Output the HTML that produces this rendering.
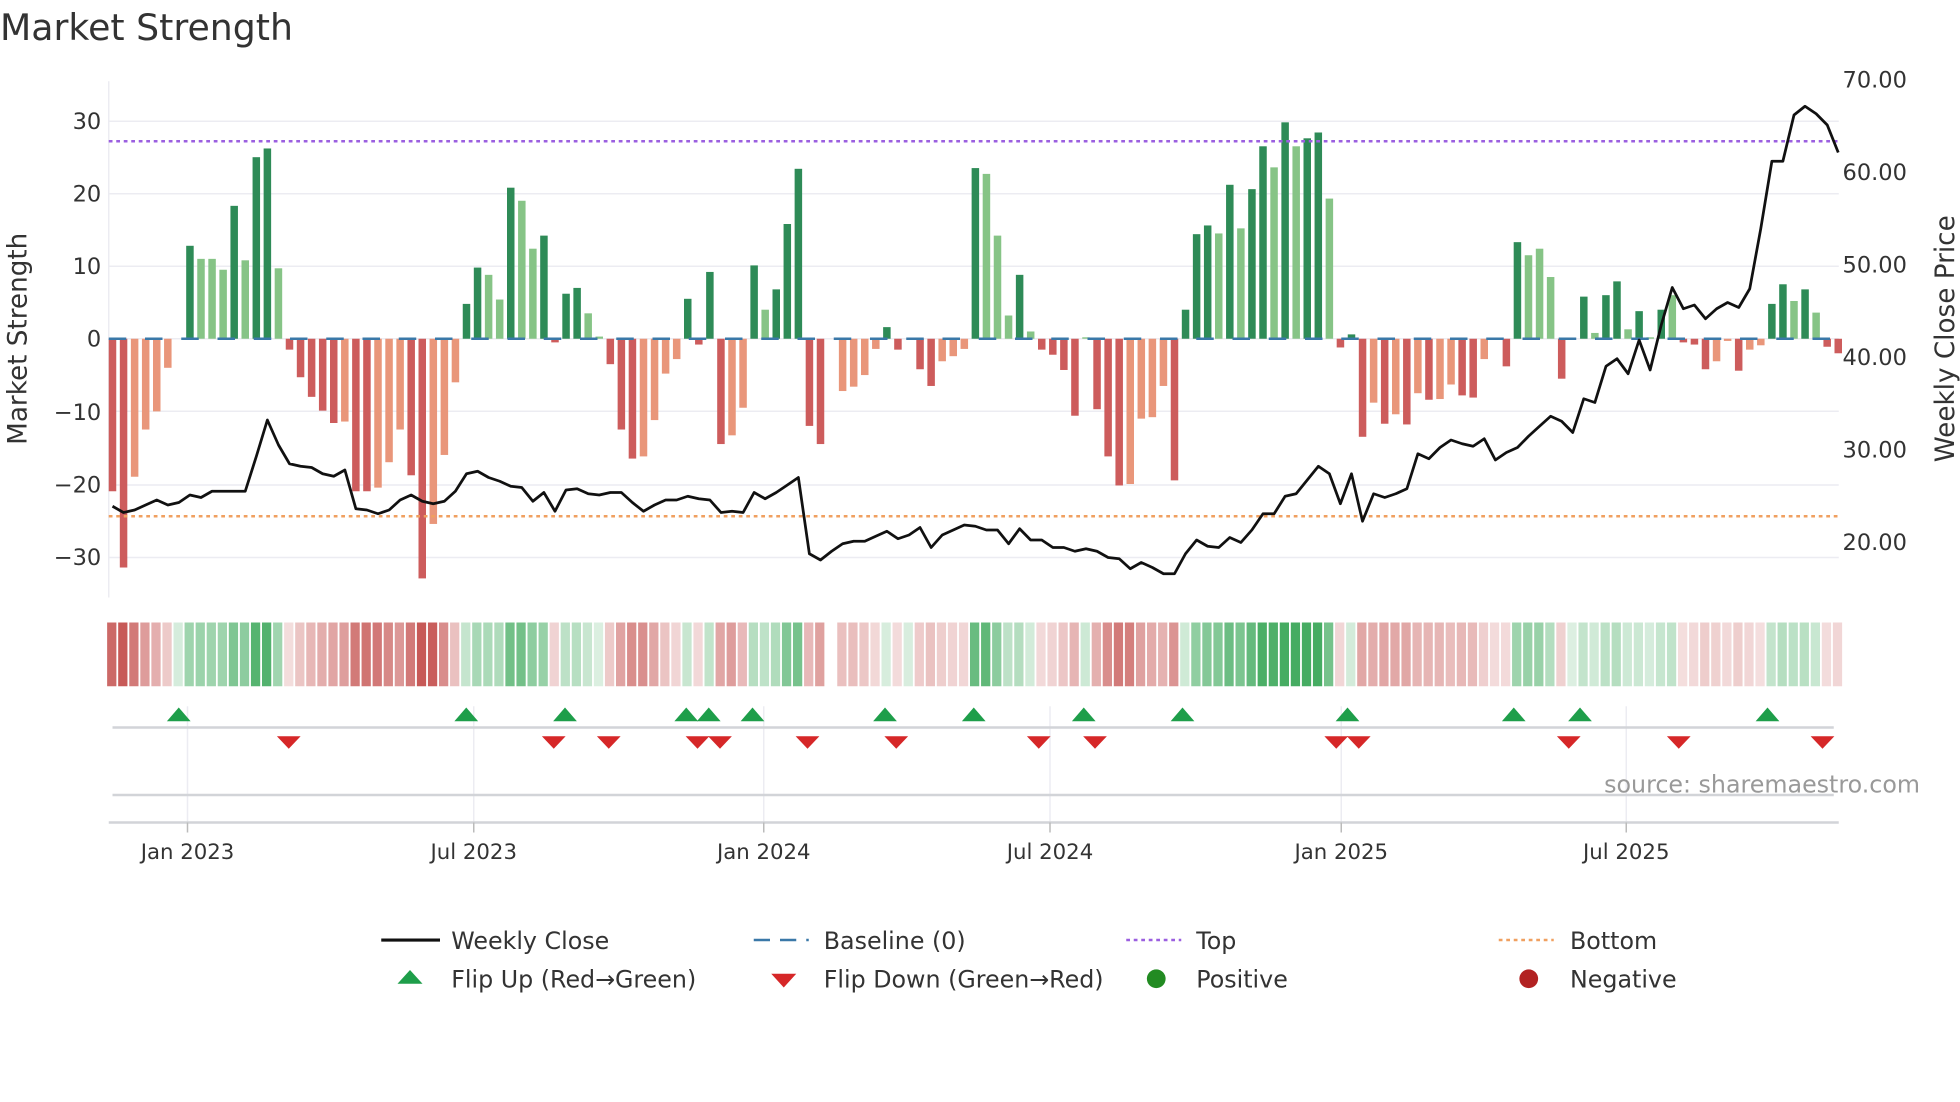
<!DOCTYPE html>
<html><head><meta charset="utf-8"><style>
html,body{margin:0;padding:0;background:#fff;width:1960px;height:1102px;overflow:hidden}
svg{display:block}
text{font-family:"DejaVu Sans","Liberation Sans",sans-serif;fill:#333}
</style></head><body>
<svg id="s" width="1960" height="1102" viewBox="0 0 1568 881.6" xmlns="http://www.w3.org/2000/svg">
<text x="0" y="32" font-size="29">Market Strength</text>
<g id="grid" stroke="#ececf2" stroke-width="1.2"></g>
<line x1="87" y1="65" x2="87" y2="478" stroke="#ececf2" stroke-width="1.2"/>
<g id="bars"></g>
<line x1="87" y1="271" x2="1471" y2="271" stroke="#3a78a8" stroke-width="2" stroke-dasharray="14 15"/>
<line x1="87" y1="113" x2="1471" y2="113" stroke="#9b5fe0" stroke-width="2" stroke-dasharray="3 3"/>
<line x1="87" y1="413" x2="1471" y2="413" stroke="#f0a060" stroke-width="2" stroke-dasharray="3 3"/>
<polyline id="price" fill="none" stroke="#111" stroke-width="2.2" stroke-linejoin="round"/>
<g font-size="18" text-anchor="end">
<text x="81" y="103">30</text><text x="81" y="161">20</text><text x="81" y="219">10</text><text x="81" y="277">0</text>
<text x="81" y="336">−10</text><text x="81" y="394">−20</text><text x="81" y="452">−30</text>
</g>
<g font-size="18">
<text x="1474" y="70">70.00</text><text x="1474" y="144">60.00</text><text x="1474" y="218">50.00</text>
<text x="1474" y="292">40.00</text><text x="1474" y="366">30.00</text><text x="1474" y="440">20.00</text>
</g>
<text transform="translate(21,271) rotate(-90)" font-size="21" text-anchor="middle">Market Strength</text>
<text transform="translate(1563,271) rotate(-90)" font-size="21" text-anchor="middle">Weekly Close Price</text>
<g id="heat"></g>
<g id="vg" stroke="#ececf2" stroke-width="1.2"></g>
<line x1="90" y1="582" x2="1467" y2="582" stroke="#d2d4d8" stroke-width="2"/>
<line x1="90" y1="636" x2="1467" y2="636" stroke="#d2d4d8" stroke-width="2"/>
<line x1="87" y1="658" x2="1471" y2="658" stroke="#d2d4d8" stroke-width="2"/>
<g id="marks"></g>
<g id="ticks" stroke="#bbb" stroke-width="1.2"></g>
<g font-size="17" text-anchor="middle">
<text x="150" y="687">Jan 2023</text><text x="379" y="687">Jul 2023</text><text x="611" y="687">Jan 2024</text>
<text x="840" y="687">Jul 2024</text><text x="1073" y="687">Jan 2025</text><text x="1301" y="687">Jul 2025</text>
</g>
<text x="1536" y="634" font-size="19" text-anchor="end" style="fill:#999">source: sharemaestro.com</text>
<g font-size="19">
<line x1="305" y1="752" x2="352" y2="752" stroke="#111" stroke-width="2.5"/>
<text x="361" y="759">Weekly Close</text>
<line x1="603" y1="752" x2="647" y2="752" stroke="#3a78a8" stroke-width="2" stroke-dasharray="13 8"/>
<text x="659" y="759">Baseline (0)</text>
<line x1="901" y1="752" x2="945" y2="752" stroke="#9b5fe0" stroke-width="2" stroke-dasharray="3 3"/>
<text x="957" y="759">Top</text>
<line x1="1199" y1="752" x2="1243" y2="752" stroke="#f0a060" stroke-width="2" stroke-dasharray="3 3"/>
<text x="1256" y="759">Bottom</text>
<polygon points="328,776 318,787 338,787" fill="#1e9e4a"/>
<text x="361" y="790">Flip Up (Red→Green)</text>
<polygon points="617,779 637,779 627,790" fill="#d62728"/>
<text x="659" y="790">Flip Down (Green→Red)</text>
<circle cx="925" cy="783" r="7.5" fill="#228b22"/>
<text x="957" y="790">Positive</text>
<circle cx="1223" cy="783" r="7.5" fill="#b22222"/>
<text x="1256" y="790">Negative</text>
</g>
</svg>
<script>
var NS="http://www.w3.org/2000/svg";
function el(p,t,a){var e=document.createElementNS(NS,t);for(var k in a)e.setAttribute(k,a[k]);document.getElementById(p).appendChild(e);return e;}
[97,155,213,271,329,388,446].forEach(function(y){el("grid","line",{x1:87,x2:1471,y1:y,y2:y});});
var d="-21R -31.5R -19S -12.5S -10S -4S 0L 12.8D 11L 11L 9.5L 18.3D 10.8L 25D 26.2D 9.7L -1.5R -5.3R -8R -9.9R -11.6R -11.4S -21R -21R -20.5S -17S -12.5S -18.8R -33R -25.5S -16S -6S 4.8D 9.8D 8.8L 5.4L 20.8D 19L 12.4L 14.2D -0.5R 6.2D 7D 3.5L 0.3L -3.5R -12.5R -16.5R -16.2S -11.2S -4.8S -2.8S 5.5D -0.8R 9.2D -14.5R -13.3S -9.5S 10.1D 4L 6.8D 15.8D 23.4D -12R -14.5R 0X -7.2S -6.6S -5S -1.4S 1.6D -1.5R 0L -4.2R -6.5R -3.1S -2.4S -1.4S 23.5D 22.7L 14.2L 3.2L 8.8D 1L -1.5R -2.2R -4.3R -10.6R 0.2L -9.7R -16.2R -20.2R -20S -11S -10.8S -6.5S -19.5R 4D 14.4D 15.6D 14.5L 21.2D 15.2L 20.6D 26.5D 23.6L 29.8D 26.5L 27.6D 28.4D 19.3L -1.2R 0.6D -13.5R -8.8S -11.7R -10.4S -11.8R -7.5S -8.4R -8.3S -6.3S -7.8R -8.1R -2.8S 0S -3.8R 13.3D 11.5L 12.4L 8.5L -5.5R 0L 5.8D 0.8L 6D 7.9D 1.3L 3.8D 0.2L 4D 6L -0.5R -0.8R -4.2R -3.1S -0.3S -4.4R -1.5S -0.9S 4.8D 7.5D 5.2L 6.8D 3.6L -1.1R -2R".split(" ");
var col={D:"#2e8b57",L:"#86c486",R:"#cd5c5c",S:"#e9967a",X:"#fff"};
var vals=[];
d.forEach(function(s,i){
 var v=parseFloat(s),t=s.slice(-1),x=90+8.85*i;vals.push([v,t]);
 if(Math.abs(v)>0.05){var y0=271,y1=271-v*5.81;el("bars","rect",{x:x-3,width:6,y:Math.min(y0,y1),height:Math.abs(y1-y0),fill:col[t]});}
});
for(var i=0;i<vals.length;i++){
 if(vals[i][1]=="X")continue;
 var s=0,n=0;for(var j=i-1;j<=i+1;j++){if(j>=0&&j<vals.length){s+=vals[j][0];n++;}}
 var v=vals[i][0]*0.6+(s/n)*0.4;var pos=(vals[i][0]>0)||(vals[i][0]==0&&vals[i][1]!="R"&&vals[i][1]!="S");
 var t=Math.min(0.95,0.18+Math.abs(v)/34);
 var c=pos?[60,168,90]:[196,80,78];
 var r=Math.round(255+(c[0]-255)*t),g=Math.round(255+(c[1]-255)*t),b=Math.round(255+(c[2]-255)*t);
 var x=90+8.85*i;el("heat","rect",{x:x-4.3,width:7.4,y:498,height:51,fill:"rgb("+r+","+g+","+b+")"});
}
[150,379,611,840,1073,1301].forEach(function(x){el("vg","line",{x1:x,x2:x,y1:565,y2:658});el("ticks","line",{x1:x,x2:x,y1:658,y2:666});});
[143,373,452,549,567,602,708,779,867,946,1078,1211,1264,1414].forEach(function(x){el("marks","polygon",{points:(x)+",566 "+(x-9.5)+",577 "+(x+9.5)+",577",fill:"#1e9e4a"});});
[231,443,487,558,576,646,717,831,876,1069,1087,1255,1343,1458].forEach(function(x){el("marks","polygon",{points:(x-9.5)+",589 "+(x+9.5)+",589 "+x+",599",fill:"#d62728"});});
var py=[405,410,408,404,400,404,402,396,398,393,393,393,393,365,336,356,371,373,374,379,381,376,407,408,411,408,400,396,401,403,401,393,379,377,382,385,389,390,401,394,409,392,391,395,396,394,394,402,409,404,400,400,397,399,400,410,409,410,394,399,394,388,382,443,448,441,435,433,433,429,425,431,428,422,438,428,424,420,421,424,424,435,423,432,432,438,438,441,439,441,446,447,455,450,454,459,459,443,432,437,438,430,434,424,411,411,397,395,384,373,379,403,379,417,395,398,395,391,363,367,358,352,355,357,351,368,362,358,349,341,333,337,346,319,322,293,287,299,272,296,260,230,247,244,255,247,242,246,231,183,129,129,92,85,91,100,122];
document.getElementById("price").setAttribute("points",py.map(function(y,i){return (90+8.85*i).toFixed(1)+","+y;}).join(" "));
</script>
</body></html>
